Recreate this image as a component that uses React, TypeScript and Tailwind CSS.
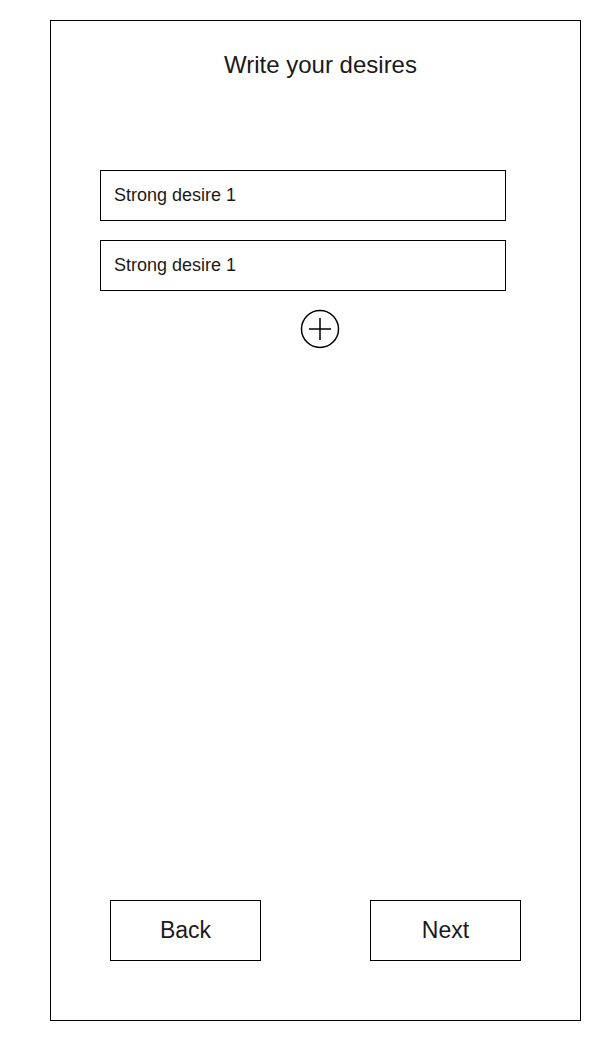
import { useState } from "react";

function IconPlusCircle() {
  return (
    <svg width="40" height="40" viewBox="0 0 40 40" fill="none" stroke="black" strokeWidth={1.5}>
      <circle cx="20" cy="20" r="18.5" />
      <path d="M9 20h22M20 9v22" />
    </svg>
  );
}

export default function App() {
  const [desires, setDesires] = useState(["Strong desire 1", "Strong desire 1"]);

  return (
    <div className="min-h-[1041px] bg-white pt-5 pl-[50px] font-['Liberation_Sans',Arial,sans-serif] text-[#1a1a1a]">
      <div className="w-[531px] h-[1001px] border border-black flex flex-col">
        {/* Title */}
        <h1 className="pl-[10px] pt-[30px] text-center text-[24px] leading-[28px]">Write your desires</h1>

        {/* Desire inputs */}
        <div className="mt-[91px] pl-[49px] flex flex-col gap-[19px]">
          {desires.map((d, i) => (
            <input
              key={i}
              value={d}
              onChange={(e) => setDesires(desires.map((v, j) => (j === i ? e.target.value : v)))}
              className="w-[406px] h-[51px] border border-black px-[13px] text-[18px] text-[#1a1a1a] outline-none"
            />
          ))}
        </div>

        <div className="mt-[18px] pl-[249px]">
          <button onClick={() => setDesires([...desires, ""])} className="block">
            <IconPlusCircle />
          </button>
        </div>

        {/* Navigation */}
        <div className="mt-auto mb-[59px] px-[59px] flex justify-between">
          <button className="w-[151px] h-[61px] border border-black text-[23px]">Back</button>
          <button className="w-[151px] h-[61px] border border-black text-[23px]">Next</button>
        </div>
      </div>
    </div>
  );
}
